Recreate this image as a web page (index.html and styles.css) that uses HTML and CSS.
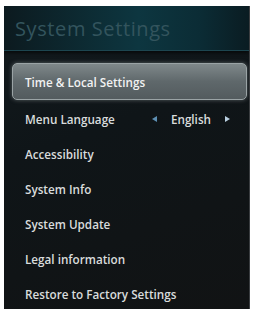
FILE: index.html
```html
<!DOCTYPE html>
<html lang="en">
<head>
  <meta charset="UTF-8" />
  <meta name="viewport" content="width=device-width, initial-scale=1" />
  <title>System Settings</title>
  <link rel="stylesheet" href="styles.css">
</head>
<body>
  <div class="panel">
    <header class="title-bar">
      <h1>System Settings</h1>
    </header>
    <ul class="menu">
      <li class="item selected">Time &amp; Local Settings</li>
      <li class="item">
        <span class="label">Menu Language</span>
        <span class="picker">
          <span class="arrow left"></span>
          <span class="value">English</span>
          <span class="arrow right"></span>
        </span>
      </li>
      <li class="item">Accessibility</li>
      <li class="item">System Info</li>
      <li class="item">System Update</li>
      <li class="item">Legal information</li>
      <li class="item">Restore to Factory Settings</li>
    </ul>
  </div>
</body>
</html>
```

FILE: styles.css
```css
html, body {
  margin: 0;
  padding: 0;
  background: #fff;
}
body {
  padding: 6px 3px 0 4px;
  font-family: 'Open Sans', sans-serif;
}
.panel {
  height: 303px;
  background: linear-gradient(160deg, #121a1e 0%, #0f1518 40%, #111314 100%);
  border-right: 1px solid #3a3d40;
  overflow: hidden;
}
.title-bar {
  height: 44px;
  background: linear-gradient(90deg, #0c1a1f 0%, #0d3640 55%, #0b2c35 80%, #0a1c22 100%);
  border-bottom: 1px solid #1d4650;
  box-shadow: 0 2px 3px rgba(0,0,0,0.6);
  display: flex;
  align-items: center;
}
.title-bar h1 {
  margin: 0 0 0 11px;
  font-size: 20px;
  font-weight: 400;
  color: #33545d;
  letter-spacing: 0.6px;
}
.menu {
  list-style: none;
  margin: 12px 0 0;
  padding: 0;
}
.item {
  height: 35px;
  display: flex;
  align-items: center;
  justify-content: space-between;
  padding: 0 19px 0 21px;
  font-size: 11.7px;
  font-weight: 600;
  color: #d9dcdc;
}
.item.selected {
  height: 35px;
  margin: 0 2px 1px 8px;
  padding-left: 12px;
  border: 1px solid #9aa3a5;
  border-radius: 5px;
  background: linear-gradient(180deg, #7f888a 0%, #5f686b 50%, #535b5e 100%);
  box-shadow: 0 0 4px rgba(160,170,172,0.5);
  color: #f2f2f2;
}
.picker {
  display: flex;
  align-items: center;
}
.value {
  margin: 0 14px 0 14px;
}
.arrow {
  width: 0;
  height: 0;
  border-top: 3px solid transparent;
  border-bottom: 3px solid transparent;
}
.arrow.left {
  border-right: 5px solid #5d8fb3;
}
.arrow.right {
  border-left: 5px solid #b9cfe0;
}
```
